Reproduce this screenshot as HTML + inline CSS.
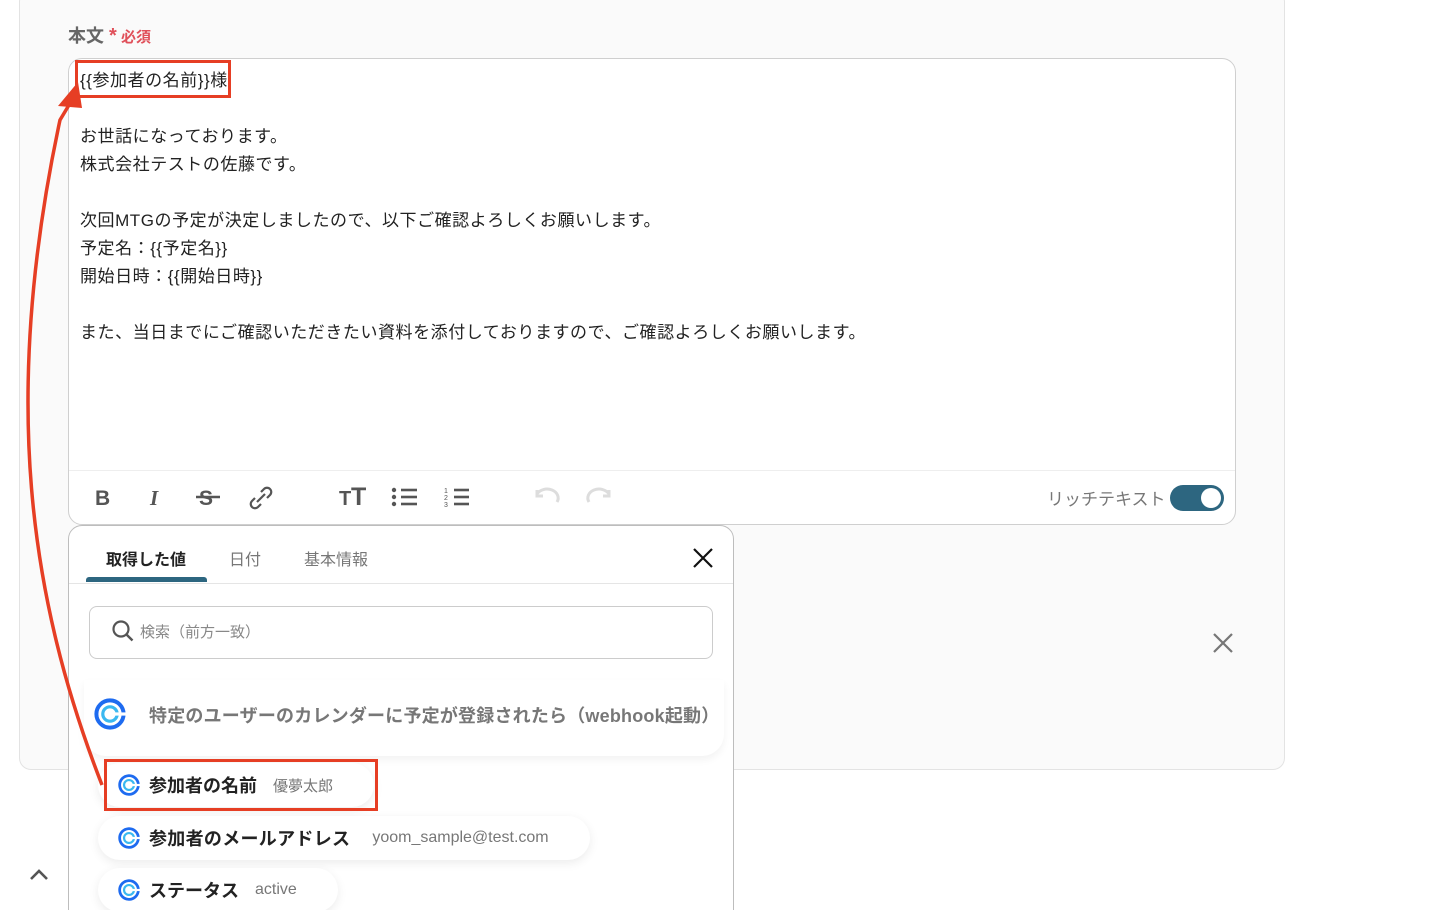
<!DOCTYPE html>
<html><head><meta charset="utf-8"><style>
*{margin:0;padding:0;box-sizing:border-box}
html,body{width:1442px;height:910px;overflow:hidden}
body{background:#fff;font-family:"Liberation Sans","Noto Sans CJK JP",sans-serif;position:relative}
.a{position:absolute}
.card{left:19px;top:-10px;width:1266px;height:780px;background:#fafafa;border:1px solid #e3e3e3;border-radius:12px}
.ed{left:68px;top:58px;width:1168px;height:467px;background:#fff;border:1px solid #cfcfcf;border-radius:14px}
.txt{left:80px;top:67px;font-size:17px;line-height:28px;color:#222;white-space:pre;letter-spacing:0.55px}
.tb{left:69px;top:470px;width:1166px;height:1px;background:#eee}
.pop{left:68px;top:525px;width:666px;height:400px;background:#fff;border:1px solid #bdbdbd;border-radius:14px 14px 0 0}
.tab{top:546px;font-size:16px;font-weight:bold}
.pill{background:#fff;border-radius:22px;box-shadow:0 3px 10px rgba(0,0,0,.08);height:44px;display:flex;align-items:center;padding-left:22px;font-size:18px;font-weight:bold;color:#222}
.pill small{font-size:15px;font-weight:normal;color:#777;margin-left:16px}
.ic{width:22px;height:22px;margin-right:9px}
</style></head><body>
<div class="a card"></div>
<div class="a" style="left:68px;top:22px;font-size:18px;color:#666;font-weight:bold">本文 <span style="color:#e0505a;font-size:15px"><span style="font-size:20px">*</span> 必須</span></div>
<div class="a ed"></div>
<div class="a txt">{{参加者の名前}}様

お世話になっております。
株式会社テストの佐藤です。

次回MTGの予定が決定しましたので、以下ご確認よろしくお願いします。
予定名：{{予定名}}
開始日時：{{開始日時}}

また、当日までにご確認いただきたい資料を添付しておりますので、ご確認よろしくお願いします。</div>
<div class="a" style="left:75px;top:60px;width:156px;height:38px;border:3px solid #e63e24"></div>
<div class="a tb"></div>
<svg class="a" style="left:85px;top:480px" width="540" height="34" viewBox="0 0 540 34">
<g fill="#555" stroke="#555">
<text x="10" y="25" font-size="21" font-weight="bold" stroke="none" font-family="Liberation Sans">B</text>
<text x="65" y="25" font-size="21" font-weight="bold" font-style="italic" stroke="none" font-family="Liberation Serif">I</text>
<text x="114" y="25" font-size="21" font-weight="bold" stroke="none" font-family="Liberation Sans">S</text>
<line x1="111" y1="17" x2="135" y2="17" stroke-width="2.5"/>
<g fill="none" stroke-width="2.2"><path d="M172 22l8-8M176 12l3-3a4 4 0 016 6l-3 3M176 24l-3 3a4 4 0 01-6-6l3-3"/></g>
<text x="254" y="25" font-size="20" font-weight="bold" stroke="none">T</text><text x="266" y="25" font-size="25" font-weight="bold" stroke="none">T</text>
<g stroke-width="2.6"><line x1="316" y1="10" x2="332" y2="10"/><line x1="316" y1="17" x2="332" y2="17"/><line x1="316" y1="24" x2="332" y2="24"/>
<line x1="369" y1="10" x2="384" y2="10"/><line x1="369" y1="17" x2="384" y2="17"/><line x1="369" y1="24" x2="384" y2="24"/></g>
<circle cx="309" cy="10" r="2.2" stroke="none"/><circle cx="309" cy="17" r="2.2" stroke="none"/><circle cx="309" cy="24" r="2.2" stroke="none"/>
<text x="359" y="13" font-size="7" stroke="none">1</text><text x="359" y="20" font-size="7" stroke="none">2</text><text x="359" y="27" font-size="7" stroke="none">3</text>
</g>
<g fill="none" stroke="#ddd" stroke-width="3"><path d="M452 14a10 8 0 0120 8M452 10v6h6"/><path d="M524 14a10 8 0 00-20 8M524 10v6h-6"/></g>
</svg>
<div class="a" style="left:1047px;top:485px;font-size:17px;color:#777">リッチテキスト</div>
<div class="a" style="left:1170px;top:485px;width:54px;height:26px;border-radius:13px;background:#2d6680"><div class="a" style="right:3px;top:3px;width:20px;height:20px;border-radius:50%;background:#fff"></div></div>
<svg class="a" style="left:1212px;top:632px" width="22" height="22"><path d="M2 2l18 18M20 2L2 20" stroke="#777" stroke-width="2.2"/></svg>
<div class="a pop"></div>
<div class="a tab" style="left:106px;color:#222">取得した値</div>
<div class="a tab" style="left:229px;color:#777;font-weight:normal">日付</div>
<div class="a tab" style="left:304px;color:#777;font-weight:normal">基本情報</div>
<div class="a" style="left:86px;top:577px;width:121px;height:5px;background:#2d6680;border-radius:3px 3px 0 0"></div>
<div class="a" style="left:69px;top:583px;width:664px;height:1px;background:#e5e5e5"></div>
<svg class="a" style="left:692px;top:547px" width="22" height="22"><path d="M2 2l18 18M20 2L2 20" stroke="#111" stroke-width="2.2"/></svg>
<div class="a" style="left:89px;top:606px;width:624px;height:53px;border:1px solid #ccc;border-radius:8px"></div>
<svg class="a" style="left:111px;top:619px" width="24" height="24"><circle cx="10" cy="10" r="7.5" fill="none" stroke="#555" stroke-width="2.2"/><path d="M15.5 15.5l6 6" stroke="#555" stroke-width="2.4"/></svg>
<div class="a" style="left:140px;top:621px;font-size:15px;color:#888">検索（前方一致）</div>
<div class="a" style="left:84px;top:680px;width:640px;height:76px;background:#fff;border-radius:0 0 22px 22px;box-shadow:0 4px 8px rgba(0,0,0,.05)"></div>
<svg class="a" style="left:94px;top:698px" width="32" height="32" viewBox="0 0 20 20"><circle cx="10" cy="10" r="8.5" fill="none" stroke="#1e6bf0" stroke-width="2.5"/><circle cx="10" cy="10" r="4.5" fill="none" stroke="#3ab8f0" stroke-width="2"/><rect x="13" y="9" width="7" height="2" fill="#fff"/></svg>
<div class="a" style="left:149px;top:702px;font-size:18px;font-weight:bold;color:#777;letter-spacing:0.2px">特定のユーザーのカレンダーに予定が登録されたら（webhook起動）</div>
<div class="a pill" style="left:98px;top:763px;width:276px;padding-left:20px">
<svg class="ic" viewBox="0 0 20 20"><circle cx="10" cy="10" r="8.5" fill="none" stroke="#1e6bf0" stroke-width="2.5"/><circle cx="10" cy="10" r="4.5" fill="none" stroke="#3ab8f0" stroke-width="2"/><rect x="13" y="9" width="7" height="2" fill="#fff"/></svg>参加者の名前<small>優夢太郎</small></div>
<div class="a" style="left:104px;top:759px;width:274px;height:52px;border:3px solid #e63e24"></div>
<div class="a pill" style="left:98px;top:816px;width:492px;padding-left:20px">
<svg class="ic" viewBox="0 0 20 20"><circle cx="10" cy="10" r="8.5" fill="none" stroke="#1e6bf0" stroke-width="2.5"/><circle cx="10" cy="10" r="4.5" fill="none" stroke="#3ab8f0" stroke-width="2"/><rect x="13" y="9" width="7" height="2" fill="#fff"/></svg><span style="letter-spacing:0.3px">参加者のメールアドレス</span><small style="margin-left:22px;font-size:16px">yoom_sample@test.com</small></div>
<div class="a pill" style="left:98px;top:868px;width:240px;padding-left:20px">
<svg class="ic" viewBox="0 0 20 20"><circle cx="10" cy="10" r="8.5" fill="none" stroke="#1e6bf0" stroke-width="2.5"/><circle cx="10" cy="10" r="4.5" fill="none" stroke="#3ab8f0" stroke-width="2"/><rect x="13" y="9" width="7" height="2" fill="#fff"/></svg>ステータス<small style="font-size:16px">active</small></div>
<svg class="a" style="left:28px;top:866px" width="22" height="16"><path d="M3 13l8-8 8 8" fill="none" stroke="#555" stroke-width="2.6"/></svg>
<svg class="a" style="left:0;top:0" width="140" height="800"><path d="M102 785C30 600 0 400 60 120L72 100" fill="none" stroke="#e63e24" stroke-width="3.5"/><path d="M78 82L58 106L82 108Z" fill="#e63e24"/></svg>
</body></html>
